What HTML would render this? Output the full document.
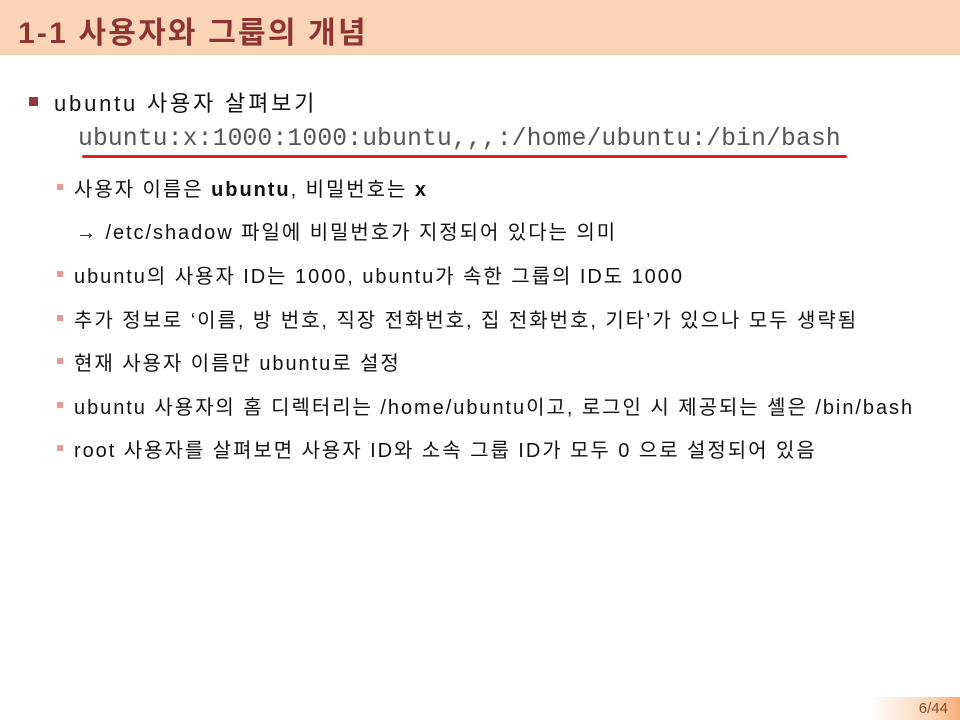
<!DOCTYPE html>
<html><head><meta charset="utf-8"><style>
body{margin:0;width:960px;height:720px;background:#fff;position:relative;overflow:hidden;font-family:"Liberation Sans","Noto Sans CJK KR",sans-serif;}
.hdr{position:absolute;left:0;top:0;width:960px;height:55px;background:#fbd4b5;}
.hdr h1{margin:0;position:absolute;left:18px;top:8px;font-size:30px;font-weight:bold;color:#8e3434;letter-spacing:2.2px;}
.b1{position:absolute;left:29px;top:97px;width:9px;height:9px;background:#953735;}
.t1{position:absolute;left:54px;top:86px;font-size:22px;color:#111;letter-spacing:2.8px;}
.code{position:absolute;left:78px;top:126px;font-family:"Liberation Mono",monospace;font-size:24.6px;color:#555;letter-spacing:0.2px;}
.ul{position:absolute;left:82px;top:155px;width:765px;height:3px;background:#e8191f;border-radius:2px;}
.s{position:absolute;left:74px;font-size:20px;color:#111;white-space:nowrap;letter-spacing:1.95px;}
.sb{position:absolute;left:57px;width:6px;height:6px;background:#e59a9a;}
.pg{position:absolute;left:870px;top:697px;width:90px;height:23px;background:linear-gradient(90deg,#fff 0%,#fbd2b0 70%,#f6ad78 100%);}
.pg span{position:absolute;right:12px;top:3px;font-size:15px;color:#8b4a2a;}
</style></head><body>
<div class="hdr"><h1>1-1 사용자와 그룹의 개념</h1></div>
<div class="b1"></div>
<div class="t1">ubuntu 사용자 살펴보기</div>
<div class="code">ubuntu:x:1000:1000:ubuntu,,,:/home/ubuntu:/bin/bash</div>
<div class="ul"></div>
<div class="sb" style="top:184px"></div><div class="s" style="top:173px">사용자 이름은 <b>ubuntu</b>, 비밀번호는 <b>x</b></div>
<div class="s" style="top:216px;left:76px">→ /etc/shadow 파일에 비밀번호가 지정되어 있다는 의미</div>
<div class="sb" style="top:271px"></div><div class="s" style="top:260px">ubuntu의 사용자 ID는 1000, ubuntu가 속한 그룹의 ID도 1000</div>
<div class="sb" style="top:315px"></div><div class="s" style="top:304px">추가 정보로 ‘이름, 방 번호, 직장 전화번호, 집 전화번호, 기타’가 있으나 모두 생략됨</div>
<div class="sb" style="top:358px"></div><div class="s" style="top:347px">현재 사용자 이름만 ubuntu로 설정</div>
<div class="sb" style="top:402px"></div><div class="s" style="top:391px">ubuntu 사용자의 홈 디렉터리는 /home/ubuntu이고, 로그인 시 제공되는 셸은 /bin/bash</div>
<div class="sb" style="top:445px"></div><div class="s" style="top:434px">root 사용자를 살펴보면 사용자 ID와 소속 그룹 ID가 모두 0 으로 설정되어 있음</div>
<div class="pg"><span>6/44</span></div>
</body></html>
